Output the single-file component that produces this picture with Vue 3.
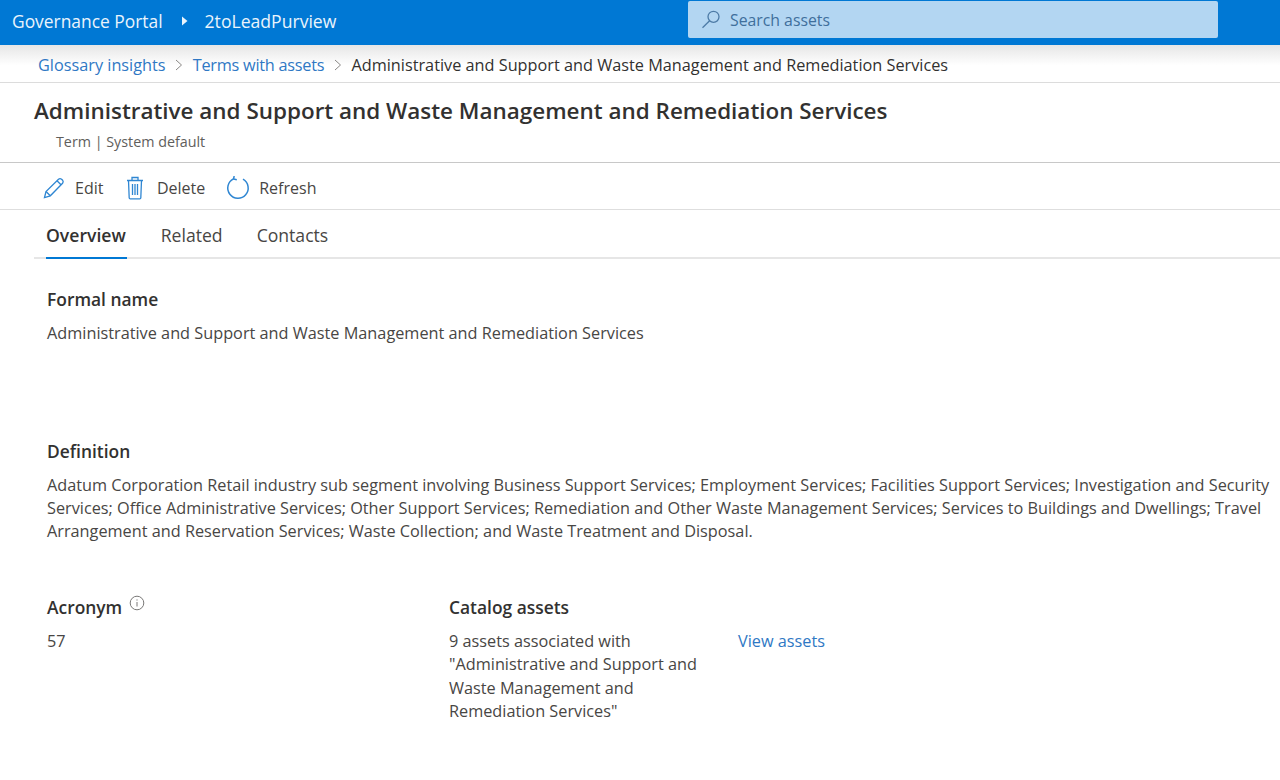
<template>
  <div class="page">
    <header class="topbar">
      <div class="brand">
        <span class="portal">Governance Portal</span>
        <svg class="caret" width="7" height="10" viewBox="0 0 7 10"><path d="M1 0.5 L6.5 5 L1 9.5 Z" fill="#eaf4fc" /></svg>
        <span class="account">2toLeadPurview</span>
      </div>
      <div class="search">
        <svg width="20" height="20" viewBox="0 0 20 20" fill="none" stroke="#4d7ba6" stroke-width="1.3">
          <circle cx="13.5" cy="6.8" r="5.5" />
          <path d="M9.6 10.7 L2.5 17.8" />
        </svg>
        <span>Search assets</span>
      </div>
    </header>

    <nav class="crumbs">
      <a>Glossary insights</a>
      <svg class="chev" width="8" height="12" viewBox="0 0 8 12" fill="none" stroke="#8a8886" stroke-width="1"><path d="M1 1 L6.5 6 L1 11" /></svg>
      <a class="terms">Terms with assets</a>
      <svg class="chev" width="8" height="12" viewBox="0 0 8 12" fill="none" stroke="#8a8886" stroke-width="1"><path d="M1 1 L6.5 6 L1 11" /></svg>
      <span>Administrative and Support and Waste Management and Remediation Services</span>
    </nav>

    <section class="title-block">
      <h1>Administrative and Support and Waste Management and Remediation Services</h1>
      <p>Term | System default</p>
    </section>

    <div class="toolbar">
      <button class="tool tool-edit">
        <svg width="22" height="22" viewBox="0 0 22 22" fill="none" stroke="#2f86d2" stroke-width="1.3">
          <path d="M1.5 20.5 L3 14.5 L15.5 2.2 Q17 1 18.6 2.2 L19.6 3.2 Q20.8 4.8 19.6 6.3 L7.3 18.8 Z" />
          <path d="M3 14.5 L7.3 18.8 M14 3.8 L18 7.8" />
        </svg>
        Edit
      </button>
      <button class="tool tool-delete">
        <svg width="18" height="24" viewBox="0 0 18 24" fill="none" stroke="#2f86d2" stroke-width="1.3">
          <path d="M1 4.5 H17 M6 4.5 V1.5 H12 V4.5" />
          <path d="M2.5 4.5 L3.2 22 Q3.3 22.8 4.2 22.8 H13.8 Q14.7 22.8 14.8 22 L15.5 4.5" />
          <path d="M6.5 8 V19 M9 8 V19 M11.5 8 V19" />
        </svg>
        Delete
      </button>
      <button class="tool tool-refresh">
        <svg width="24" height="24" viewBox="0 0 24 24" fill="none" stroke="#2f86d2" stroke-width="1.5">
          <path d="M7.5 2.8 A10.2 10.2 0 1 0 17 3.1" />
          <path d="M8.2 0 L7.5 3 L10.8 3.8" />
        </svg>
        Refresh
      </button>
    </div>

    <div class="tabs">
      <span class="tab active">Overview</span>
      <span class="tab">Related</span>
      <span class="tab">Contacts</span>
    </div>

    <main class="content">
      <div class="field formal">
        <h2>Formal name</h2>
        <p>Administrative and Support and Waste Management and Remediation Services</p>
      </div>
      <div class="field definition">
        <h2>Definition</h2>
        <p>Adatum Corporation Retail industry sub segment involving Business Support Services; Employment Services; Facilities Support Services; Investigation and Security Services; Office Administrative Services; Other Support Services; Remediation and Other Waste Management Services; Services to Buildings and Dwellings; Travel Arrangement and Reservation Services; Waste Collection; and Waste Treatment and Disposal.</p>
      </div>
      <div class="bottom">
        <div class="field acronym">
          <h2>Acronym
            <svg class="info" width="16" height="16" viewBox="0 0 16 16" fill="none" stroke="#7a7978" stroke-width="1">
              <circle cx="8" cy="8" r="6.8" />
              <path d="M8 7 V11.5 M8 4.4 V5.6" />
            </svg>
          </h2>
          <p>57</p>
        </div>
        <div class="field catalog">
          <h2>Catalog assets</h2>
          <div class="catalog-row">
            <p>9 assets associated with "Administrative and Support and Waste Management and Remediation Services"</p>
            <a>View assets</a>
          </div>
        </div>
      </div>
    </main>
  </div>
</template>

<style>
html, body {
  margin: 0;
  background: #fff;
}
</style>

<style scoped>
.page {
  width: 1280px;
  height: 780px;
  overflow: hidden;
  font-family: "Open Sans", "Noto Sans", sans-serif;
  color: #323130;
  font-size: 15px;
}

.topbar {
  height: 45px;
  background: #0078d4;
  display: flex;
  align-items: center;
  color: #fff;
}

.brand {
  width: 688px;
  display: flex;
  align-items: center;
  padding: 0 0 3px 12px;
  box-sizing: border-box;
  color: #eaf4fc;
  font-size: 17.4px;
}

.account {
  font-size: 17.6px;
}

.caret {
  margin: 0 17px 1px 18px;
}

.search {
  width: 530px;
  height: 37px;
  margin-top: -6px;
  background: #b3d6f2;
  border-radius: 2px;
  display: flex;
  align-items: center;
  gap: 10px;
  padding: 1px 0 0 12px;
  box-sizing: border-box;
  color: #3f6f9c;
  font-size: 15.8px;
}

.crumbs {
  height: 38px;
  padding: 3px 0 0 38px;
  box-sizing: border-box;
  display: flex;
  align-items: center;
  gap: 9.6px;
  font-size: 16.28px;
  background: linear-gradient(#e6e6e6, #ffffff 55%);
  border-bottom: 1px solid #dcdcdc;
}

.crumbs a {
  color: #2f78c4;
}

.crumbs .terms {
  letter-spacing: -0.25px;
}

.title-block {
  height: 80px;
  padding-left: 34px;
  border-bottom: 1px solid #c8c8c8;
  box-sizing: border-box;
}

h1 {
  margin: 0;
  padding-top: 12px;
  font-size: 22.45px;
  font-weight: 600;
  line-height: 32px;
}

.title-block p {
  margin: 5px 0 0 22px;
  font-size: 14.3px;
  color: #605e5c;
}

.toolbar {
  height: 47px;
  box-sizing: border-box;
  padding: 4px 0 0 43px;
  display: flex;
  align-items: center;
  border-bottom: 1px solid #dedede;
}

.tool {
  display: flex;
  align-items: center;
  gap: 10px;
  background: none;
  border: none;
  padding: 0;
  font: inherit;
  font-size: 16px;
  color: #484644;
}

.tool-delete {
  margin-left: 22.5px;
  gap: 13px;
}

.tool-refresh {
  margin-left: 21px;
  gap: 9px;
}

.tabs {
  height: 49px;
  margin-left: 34px;
  display: flex;
  gap: 34px;
  border-bottom: 2px solid #e6e6e6;
  box-sizing: border-box;
  padding-left: 12px;
  font-size: 17.6px;
  color: #484644;
}

.tab {
  line-height: 50px;
  height: 49px;
}

.active {
  font-weight: 600;
  color: #323130;
  border-bottom: 2px solid #0078d4;
  box-sizing: border-box;
  padding-right: 1px;
}

.content {
  padding: 28px 0 0 47px;
}

h2 {
  margin: 0;
  font-size: 17.4px;
  font-weight: 600;
  line-height: 24px;
  height: 24px;
}

.field p {
  margin: 11px 0 0;
  font-size: 16.28px;
  line-height: 23.3px;
  color: #484644;
}

.definition {
  margin-top: 93.4px;
}

.bottom {
  display: flex;
  margin-top: 51.6px;
}

.acronym {
  width: 402px;
}

.info {
  vertical-align: 3px;
  margin-left: 2px;
}

.catalog-row {
  display: flex;
}

.catalog-row p {
  width: 250px;
  margin-right: 39px;
}

.catalog-row a {
  margin-top: 11px;
  line-height: 23.3px;
  color: #2f78c4;
  font-size: 16.28px;
}
</style>
